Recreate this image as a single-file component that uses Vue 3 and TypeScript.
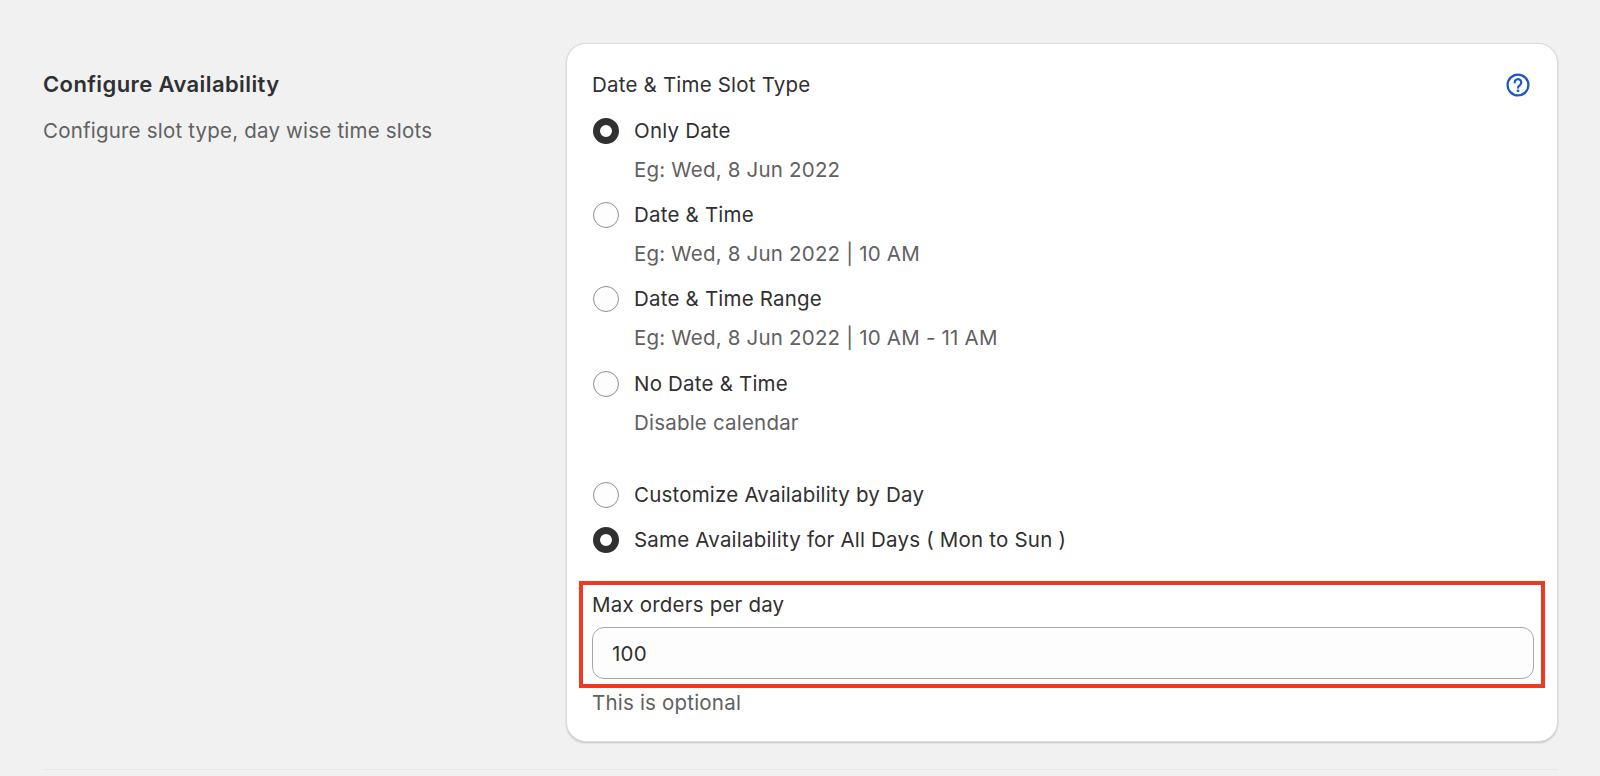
<template>
    <main class="page">
        <section class="section">
            <div class="intro">
                <h2 class="intro-title">Configure Availability</h2>
                <p class="intro-text">Configure slot type, day wise time slots</p>
            </div>
            <div class="card">
                <div class="card-head">
                    <span class="field-label">Date &amp; Time Slot Type</span>
                    <svg class="help" viewBox="0 0 24 24" fill="none" aria-hidden="true">
                        <circle cx="12" cy="12" r="10.4" stroke="currentColor" stroke-width="2.2" />
                        <path d="M8.7 9.4a3.3 3.3 0 1 1 5.2 2.7c-1.2.8-1.9 1.3-1.9 2.6" stroke="currentColor" stroke-width="2.2" stroke-linecap="round" />
                        <circle cx="12" cy="17.8" r="1.4" fill="currentColor" />
                    </svg>
                </div>
                <div class="slot-types">
                    <div v-for="slot in slotTypes" :key="slot.label" class="slot-type">
                        <label class="radio-row">
                            <span class="radio" :class="{ checked: slot.label === slotType }"></span>
                            <span>{{ slot.label }}</span>
                        </label>
                        <p class="radio-help">{{ slot.help }}</p>
                    </div>
                </div>
                <div class="availability">
                    <label v-for="option in availabilityOptions" :key="option" class="radio-row">
                        <span class="radio" :class="{ checked: option === availability }"></span>
                        <span>{{ option }}</span>
                    </label>
                </div>
                <div class="highlight">
                    <label class="field-label" for="max-orders">Max orders per day</label>
                    <input id="max-orders" class="input" type="text" value="100" />
                </div>
                <p class="hint">This is optional</p>
            </div>
        </section>
        <hr class="divider" />
    </main>
</template>
<script lang="ts" setup>
type SlotType = {
    label: string;
    help: string;
};

const slotTypes: SlotType[] = [
    { label: 'Only Date', help: 'Eg: Wed, 8 Jun 2022' },
    { label: 'Date & Time', help: 'Eg: Wed, 8 Jun 2022 | 10 AM' },
    { label: 'Date & Time Range', help: 'Eg: Wed, 8 Jun 2022 | 10 AM - 11 AM' },
    { label: 'No Date & Time', help: 'Disable calendar' },
];

const availabilityOptions = [
    'Customize Availability by Day',
    'Same Availability for All Days ( Mon to Sun )',
];

const slotType = 'Only Date';
const availability = availabilityOptions[1];
</script>
<style scoped>
.page {
    height: 776px;
    box-sizing: border-box;
    padding: 43px 42px 0 43px;
    overflow: hidden;
    color: #303030;
    font-family: Inter, "Liberation Sans", sans-serif;
    font-size: 20.5px;
    letter-spacing: 0.2px;
    line-height: 28px;
}

.section {
    display: grid;
    grid-template-columns: 523px 1fr;
}

.intro-title {
    margin: 27px 0 0;
    font-size: 22px;
    letter-spacing: 0.4px;
    line-height: 28px;
    font-weight: 600;
}

.intro-text {
    margin: 19px 0 0;
    color: #616161;
}

.card {
    height: 699px;
    box-sizing: border-box;
    padding: 27px 25px 0 25px;
    background: #fff;
    border: 1px solid #dcdcdc;
    border-radius: 20px;
    box-shadow: 0 1px 2px rgba(0, 0, 0, 0.2);
}

.card-head {
    display: flex;
    justify-content: space-between;
    align-items: center;
}

.help {
    width: 24px;
    height: 24px;
    margin-right: 2px;
    color: #1c55d0;
}

.slot-types {
    display: flex;
    flex-direction: column;
    gap: 17.2px;
    margin-top: 18px;
}

.radio-row {
    display: flex;
    align-items: center;
    gap: 15px;
    height: 28px;
}

.radio {
    flex: none;
    width: 26px;
    height: 26px;
    margin-left: 1px;
    box-sizing: border-box;
    border: 1px solid #8f8f8f;
    border-radius: 50%;
    background: #fdfdfd;
}

.radio.checked {
    border: 7px solid #303030;
    background: #fff;
}

.radio-help {
    margin: 11px 0 0 42px;
    color: #616161;
}

.availability {
    display: flex;
    flex-direction: column;
    gap: 17px;
    margin-top: 44px;
}

.highlight {
    margin: 27px -13px 0;
    padding: 6px 7px 5px 9px;
    border: 4px solid #ee3b1f;
}

.highlight .field-label {
    display: block;
}

.input {
    display: block;
    width: 100%;
    height: 52px;
    box-sizing: border-box;
    margin-top: 8px;
    padding: 2px 19px 0;
    color: #303030;
    font: inherit;
    letter-spacing: inherit;
    background: #fdfdfd;
    border: 1px solid #a8a8a8;
    border-radius: 12px;
    outline: none;
}

.hint {
    margin: 1px 0 0;
    color: #616161;
}

.divider {
    margin: 27px 0 0;
    border: 0;
    border-top: 1px solid #e6e6e6;
}
</style>
<style>
body {
    background: #f1f1f1;
}
</style>
